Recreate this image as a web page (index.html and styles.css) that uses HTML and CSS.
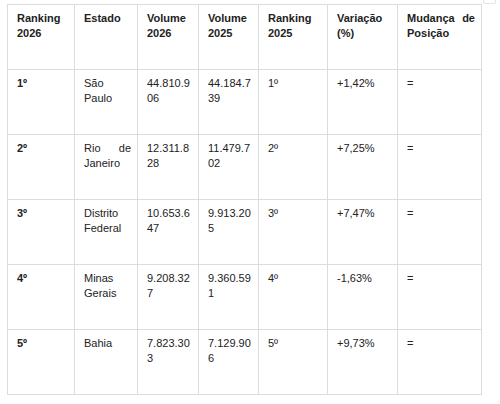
FILE: index.html
```html
<!DOCTYPE html>
<html lang="pt-BR">
<head>
  <meta charset="UTF-8" />
  <meta name="viewport" content="width=device-width, initial-scale=1.0"/>
  <title>Ranking por Estado</title>
  <link rel="stylesheet" href="styles.css">
</head>
<body>

<span class="corner-handle"></span>

<table class="ranking">
  <colgroup>
    <col class="c-rank">
    <col class="c-state">
    <col class="c-vol">
    <col class="c-vol2">
    <col class="c-rank2">
    <col class="c-var">
    <col class="c-move">
  </colgroup>
  <tr>
    <th>Ranking 2026</th>
    <th>Estado</th>
    <th>Volume 2026</th>
    <th>Volume 2025</th>
    <th>Ranking 2025</th>
    <th>Variação (%)</th>
    <th>Mudança de Posição</th>
  </tr>
  <tr>
    <td class="pos">1º</td>
    <td>São Paulo</td>
    <td class="num">44.810.906</td>
    <td class="num">44.184.739</td>
    <td>1º</td>
    <td>+1,42%</td>
    <td>=</td>
  </tr>
  <tr>
    <td class="pos">2º</td>
    <td>Rio de Janeiro</td>
    <td class="num">12.311.828</td>
    <td class="num">11.479.702</td>
    <td>2º</td>
    <td>+7,25%</td>
    <td>=</td>
  </tr>
  <tr>
    <td class="pos">3º</td>
    <td>Distrito Federal</td>
    <td class="num">10.653.647</td>
    <td class="num">9.913.205</td>
    <td>3º</td>
    <td>+7,47%</td>
    <td>=</td>
  </tr>
  <tr>
    <td class="pos">4º</td>
    <td>Minas Gerais</td>
    <td class="num">9.208.327</td>
    <td class="num">9.360.591</td>
    <td>4º</td>
    <td>-1,63%</td>
    <td>=</td>
  </tr>
  <tr>
    <td class="pos">5º</td>
    <td>Bahia</td>
    <td class="num">7.823.303</td>
    <td class="num">7.129.906</td>
    <td>5º</td>
    <td>+9,73%</td>
    <td>=</td>
  </tr>
</table>

</body>
</html>
```

FILE: styles.css
```css
body {
  margin: 4px 0 0 7px;
  font-family: 'Liberation Sans', Arial, sans-serif;
  font-size: 11px;
  color: #222;
  background: #fff;
}
.corner-handle {
  position: absolute;
  top: -9px;
  right: 4px;
  width: 11px;
  height: 11px;
  border: 1px solid #e4e4e4;
  border-radius: 2px;
}
.ranking {
  border-collapse: collapse;
  table-layout: fixed;
  width: 474px;
}
.c-rank { width: 67px; }
.c-state { width: 63px; }
.c-vol { width: 61px; }
.c-vol2 { width: 60px; }
.c-rank2 { width: 69px; }
.c-var { width: 70px; }
.c-move { width: 84px; }
.ranking tr {
  height: 65px;
}
.ranking th,
.ranking td {
  border: 1px solid #dcdcdc;
  padding: 6px 6px 6px 9px;
  vertical-align: top;
  text-align: justify;
  line-height: 15px;
}
.ranking th {
  font-weight: bold;
}
.pos {
  font-weight: bold;
}
.num {
  word-break: break-all;
}
```
